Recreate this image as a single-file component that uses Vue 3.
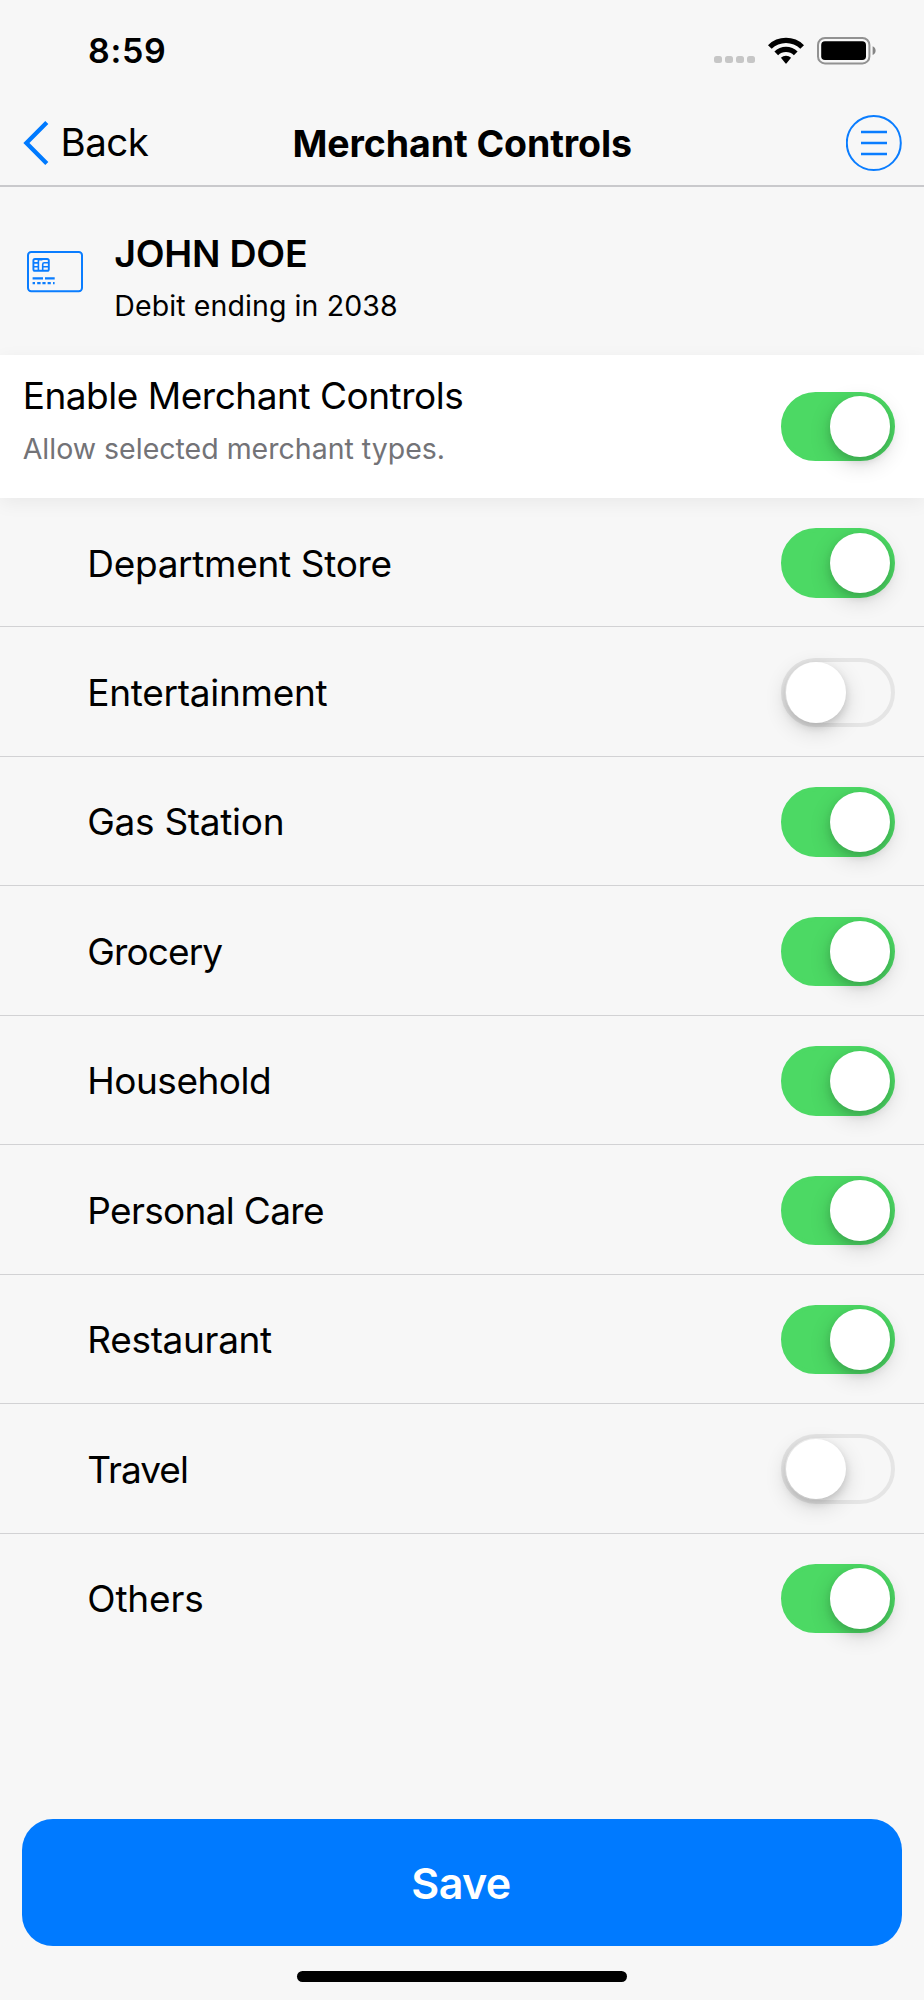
<script setup>
import { reactive } from 'vue'

const main = reactive({ on: true })

// spacing: letter-spacing of the label, in px
const types = reactive([
  { name: 'Department Store', on: true, spacing: -0.32 },
  { name: 'Entertainment', on: false, spacing: -0.28 },
  { name: 'Gas Station', on: true, spacing: -0.3 },
  { name: 'Grocery', on: true, spacing: -0.88 },
  { name: 'Household', on: true, spacing: -0.5 },
  { name: 'Personal Care', on: true, spacing: -0.68 },
  { name: 'Restaurant', on: true, spacing: -0.34 },
  { name: 'Travel', on: false, spacing: -1 },
  { name: 'Others', on: true, spacing: -0.16 },
])
</script>

<template>
  <div class="screen">
    <div class="status">
      <span class="time">8:59</span>
      <div class="indicators">
        <div class="signal"><i v-for="n in 4" :key="n"></i></div>
        <svg class="wifi" width="36" height="28" viewBox="0 0 36 28">
          <path d="M0 8.2 A25.2 25.2 0 0 1 36 8.2 L32.3 11.8 A20.3 20.3 0 0 0 3.7 11.8 Z" />
          <path d="M6.4 14.5 A16.3 16.3 0 0 1 29.6 14.5 L25.9 18.2 A11.3 11.3 0 0 0 10.1 18.2 Z" />
          <path d="M12.9 20.8 A7.4 7.4 0 0 1 23.1 20.8 L18.6 26.3 Q18 27 17.4 26.3 Z" />
        </svg>
        <svg class="battery" width="60" height="28" viewBox="0 0 60 28">
          <rect x="1" y="1" width="51.4" height="25.4" rx="7" fill="none" stroke="#929292" stroke-width="2" />
          <rect x="4.2" y="4.3" width="44.8" height="18.8" rx="3.8" />
          <path d="M55.6 9.3 C59.6 10.6 59.6 16.6 55.6 17.9 Z" fill="#858585" />
        </svg>
      </div>
    </div>

    <header class="nav">
      <button class="back">
        <svg width="26" height="46" viewBox="0 0 26 46">
          <path d="M23.8 2.4 L3.4 23 L23.8 43.6" fill="none" stroke="#007aff" stroke-width="4.3" />
        </svg>
        <span>Back</span>
      </button>
      <h1>Merchant Controls</h1>
      <button class="menu">
        <svg width="56" height="56" viewBox="0 0 56 56" fill="none" stroke="#0a7dff">
          <circle cx="27.8" cy="28" r="27" stroke-width="2" />
          <path d="M15 17 H41 M15 28 H41 M15 39 H41" stroke-width="2.3" />
        </svg>
      </button>
    </header>

    <section class="account">
      <svg class="card" width="56" height="42" viewBox="0 0 56 42" fill="none" stroke="#0a7dff">
        <rect x="1" y="1" width="54" height="39.2" rx="3.2" stroke-width="2" />
        <rect x="6.4" y="8" width="15.4" height="11.8" rx="1.6" stroke-width="1.9" />
        <path d="M11.4 8 V19.8 M6.2 11.9 H11.4 M6.2 15.8 H11.4 M15.7 19.8 V13.4 Q15.7 11.8 17.3 11.8 H21.6 M15.7 15.8 H21.6 M11.4 8.8 H15.4" stroke-width="1.6" />
        <path d="M5.6 27.4 H16 M18 27.4 H27.7" stroke-width="2.1" />
        <path d="M5.6 32.1 H8 M10.2 32.1 H13.6 M15.4 32.1 H18.6 M20.6 32.1 H23.8 M26 32.1 H27.6" stroke-width="2.1" />
      </svg>
      <div class="holder">
        <strong>JOHN DOE</strong>
        <span>Debit ending in 2038</span>
      </div>
    </section>

    <section class="enable">
      <div class="copy">
        <span class="title">Enable Merchant Controls</span>
        <span class="hint">Allow selected merchant types.</span>
      </div>
      <button class="toggle" :class="{ on: main.on }" @click="main.on = !main.on"><i></i></button>
    </section>

    <ul class="types">
      <li v-for="t in types" :key="t.name">
        <span :style="{ letterSpacing: t.spacing + 'px' }">{{ t.name }}</span>
        <button class="toggle" :class="{ on: t.on }" @click="t.on = !t.on"><i></i></button>
      </li>
    </ul>

    <footer>
      <button class="save">Save</button>
      <div class="home"></div>
    </footer>
  </div>
</template>

<style>
body { background: #f7f7f7; }
</style>

<style scoped>
.screen {
  width: 924px;
  height: 2000px;
  overflow: hidden;
  display: flex;
  flex-direction: column;
  background: #f7f7f7;
  color: #000;
  font-family: Inter, "Liberation Sans", sans-serif;
}
button { border: 0; padding: 0; margin: 0; background: none; font: inherit; color: inherit; }
svg { display: block; flex: none; }

.status {
  height: 100px;
  flex: none;
  box-sizing: border-box;
  display: flex;
  justify-content: space-between;
  padding: 0 47px 0 88px;
}
.time { font-size: 34px; font-weight: 600; line-height: 102px; letter-spacing: 0.7px; }
.indicators { display: flex; align-items: flex-start; padding-top: 36.5px; }
.signal { display: flex; gap: 3px; padding-top: 19px; margin-right: 13px; }
.signal i { width: 8px; height: 7.5px; border-radius: 2.5px; background: #c6c6c6; }
.wifi { margin-right: 13px; }

.nav {
  height: 87px;
  flex: none;
  box-sizing: border-box;
  border-bottom: 2px solid #c9c9cc;
  display: grid;
  grid-template-columns: 1fr auto 1fr;
  align-items: center;
  padding: 0 22px 0 22.5px;
}
.back { display: flex; align-items: center; gap: 12px; font-size: 38.5px; line-height: 46px; letter-spacing: -0.5px; }
.back span { margin-top: -2px; }
h1 { margin: 3px 0 0; font-size: 37.5px; font-weight: 700; line-height: 46px; letter-spacing: -0.1px; }
.menu { justify-self: end; }

.account {
  height: 168px;
  flex: none;
  box-sizing: border-box;
  display: flex;
  align-items: flex-start;
  padding: 44px 0 0 27px;
}
.card { margin-top: 19.5px; }
.holder { display: flex; flex-direction: column; margin-left: 31.3px; }
.holder strong { font-size: 37.5px; font-weight: 600; line-height: 46px; letter-spacing: -0.25px; }
.holder span { margin-top: 11px; font-size: 28.5px; line-height: 36px; letter-spacing: 0.1px; }

.enable {
  position: relative;
  z-index: 1;
  height: 143px;
  flex: none;
  box-sizing: border-box;
  display: flex;
  align-items: center;
  justify-content: space-between;
  padding: 0 29px 0 22px;
  background: #fff;
  box-shadow: 0 5px 18px rgba(0, 0, 0, 0.06);
}
.copy { display: flex; flex-direction: column; align-self: flex-start; padding-top: 17.5px; }
.title { margin-left: 0.7px; font-size: 37px; line-height: 46px; letter-spacing: -0.48px; }
.hint { margin: 12px 0 0 0.7px; font-size: 28.5px; line-height: 36px; color: #737377; }

.types { list-style: none; margin: 0; padding: 0; }
.types li {
  height: 129.45px;
  box-sizing: border-box;
  display: flex;
  align-items: center;
  justify-content: space-between;
  padding: 1.8px 29px 0 87.3px;
  border-bottom: 1px solid #d2d2d4;
}
.types li:last-child { border-bottom-color: transparent; }
.types span { padding-top: 1px; font-size: 37px; line-height: 46px; }

.toggle {
  flex: none;
  width: 114px;
  height: 69.5px;
  box-sizing: border-box;
  border-radius: 35px;
  border: 4px solid #e5e5e5;
  display: flex;
  align-items: center;
}
.toggle i {
  width: 60.5px;
  height: 60.5px;
  border-radius: 50%;
  background: #fff;
  margin: 0 0.6px;
  box-shadow: 0 7px 22px rgba(0, 0, 0, 0.16), 0 4px 8px rgba(0, 0, 0, 0.13);
}
.toggle.on { border-color: #4cd964; background: #4cd964; justify-content: flex-end; }

footer { margin-top: auto; padding-bottom: 18px; display: flex; flex-direction: column; align-items: center; }
.save {
  width: 879.5px;
  height: 127px;
  border-radius: 31px;
  background: #007aff;
  color: #fff;
  font-size: 43px;
  font-weight: 600;
  line-height: 52px;
  letter-spacing: -0.6px;
  padding: 1px 2px 0 0;
}
.home { width: 330px; height: 11px; margin-top: 25px; border-radius: 6px; background: #000; }
</style>
